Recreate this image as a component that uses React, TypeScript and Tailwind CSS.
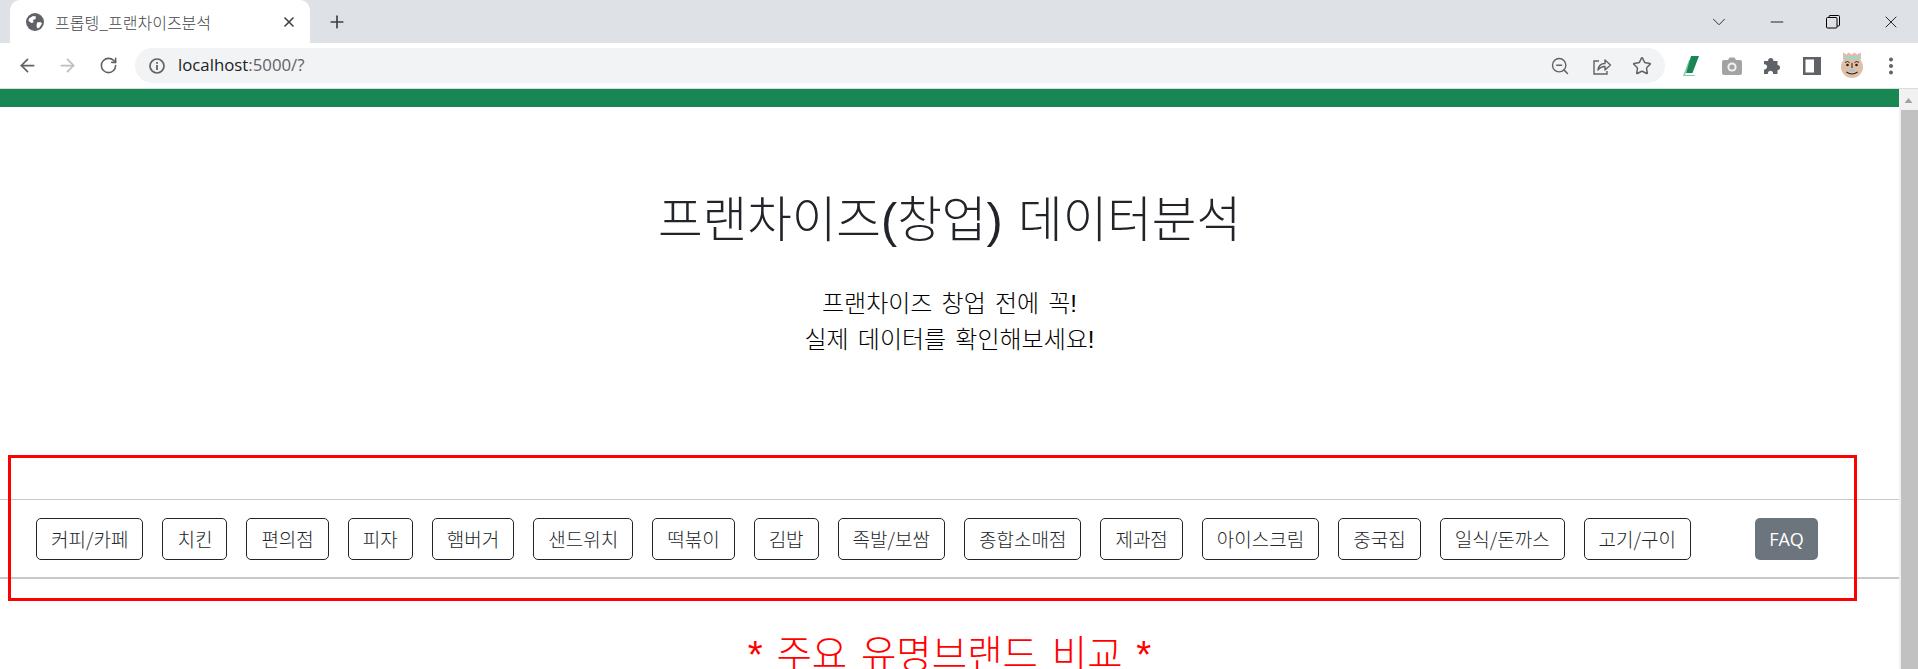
import { ArrowLeft, ArrowRight, RotateCw, Star, ZoomOut, Plus, X, ChevronDown, Minus } from 'lucide-react'

const categories = [
  '커피/카페', '치킨', '편의점', '피자', '햄버거', '샌드위치', '떡볶이', '김밥',
  '족발/보쌈', '종합소매점', '제과점', '아이스크림', '중국집', '일식/돈까스', '고기/구이',
]

function Globe() {
  return (
    <svg width="18" height="18" viewBox="0 0 18 18">
      <circle cx="9" cy="9" r="9" fill="#5f6368" />
      <path d="M3 5.5 7 3l3 .5-.5 2.5-2.5 1 .5 2.5-2 .5L2.5 8z" fill="#fff" />
      <path d="M11 9.5l3.5-.5 1.5 1.5-2.5 4-2 1-1-2.5z" fill="#fff" />
    </svg>
  )
}

function InfoIcon() {
  return (
    <svg width="18" height="18" viewBox="0 0 18 18" fill="none">
      <circle cx="9" cy="9" r="7" stroke="#5f6368" strokeWidth="1.7" />
      <rect x="8.1" y="8" width="1.8" height="5" fill="#5f6368" />
      <rect x="8.1" y="5" width="1.8" height="1.8" fill="#5f6368" />
    </svg>
  )
}

function ShareIcon() {
  return (
    <svg width="20" height="20" viewBox="0 0 20 20" fill="none" stroke="#5f6368" strokeWidth="1.4">
      <path d="M7 5H2v13h13v-3" />
      <path d="M6 14c.5-4 3-6.5 7-6.5V4l5.5 5-5.5 5v-3.5c-3 0-5 1-7 3.5z" strokeLinejoin="round" />
    </svg>
  )
}

function Restore() {
  return (
    <svg width="14" height="14" viewBox="0 0 14 14" fill="none" stroke="#000" strokeWidth="1">
      <rect x="0.5" y="2.5" width="10.5" height="10.5" rx="1" />
      <path d="M3 2.5V1.5a1 1 0 0 1 1-1h8.5a1 1 0 0 1 1 1V10a1 1 0 0 1-1 1H11" />
    </svg>
  )
}

function SlantMark() {
  return (
    <svg width="20" height="22" viewBox="0 0 20 22">
      <path d="M1 21 7 5h1.5L3 20h10l-.5 1z" fill="#7fcfa8" />
      <path d="M9 1h8l-6.5 17H4z" fill="#188754" />
    </svg>
  )
}

function Camera() {
  return (
    <svg width="20" height="18" viewBox="0 0 20 18">
      <path d="M6 3l1.5-2.5h5L14 3h4a2 2 0 0 1 2 2v11a2 2 0 0 1-2 2H2a2 2 0 0 1-2-2V5a2 2 0 0 1 2-2z" fill="#a3a3a3" />
      <circle cx="10" cy="10" r="4.6" fill="#fff" opacity="0.85" />
      <circle cx="10" cy="10" r="2.6" fill="#a3a3a3" />
    </svg>
  )
}

function Puzzle() {
  return (
    <svg width="19" height="19" viewBox="0 0 19 19">
      <path d="M1 6h4.2a2.6 2.6 0 1 1 5.1 0H14.5v4a2.6 2.6 0 1 1 0 5.2V19H10a2.6 2.6 0 1 0-5 0H1v-4.6a2.6 2.6 0 1 0 0-5.1z" fill="#5f6368" transform="translate(0 -1)" />
    </svg>
  )
}

function SidePanel() {
  return (
    <svg width="18" height="18" viewBox="0 0 18 18">
      <rect width="18" height="18" fill="#5f6368" />
      <rect x="2.5" y="2.5" width="8.5" height="13" fill="#fff" />
    </svg>
  )
}

function Avatar() {
  return (
    <svg width="24" height="27" viewBox="0 0 24 27">
      <circle cx="12" cy="15" r="11" fill="#dfbfa6" />
      <path d="M3 0.5l3.5 2 2-2 3 2 3-2 2.5 2 4-2v7H3z" fill="#e8b7b0" />
      <path d="M4 4h16v3H4z" fill="#9dd9c0" />
      <path d="M5 10.5q2.5-2 4.5 0M14.5 10.5q2.500-2 4.500 0" stroke="#333" strokeWidth="1" fill="none" />
      <circle cx="7.500" cy="13" r="1.300" fill="#222" />
      <circle cx="16.500" cy="13" r="1.300" fill="#222" />
      <rect x="11.300" y="11" width="1.400" height="5" fill="#5a4a42" />
      <path d="M9.500 17.500h5v2h-5z" fill="#8fc7e8" />
      <path d="M6.500 20q5.500 4 11 0" stroke="#222" strokeWidth="1.200" fill="none" />
    </svg>
  )
}

function Dots() {
  return (
    <svg width="6" height="18" viewBox="0 0 6 18" fill="#5f6368">
      <circle cx="3" cy="2.500" r="2" />
      <circle cx="3" cy="9" r="2" />
      <circle cx="3" cy="15.500" r="2" />
    </svg>
  )
}

function BrowserChrome() {
  return (
    <div className="font-['Noto_Sans','Noto_Sans_CJK_KR',sans-serif]">
      {/* 탭 영역 */}
      <div className="flex h-[43px] items-center bg-[#dee1e6]">
        <div className="relative ml-[10px] flex h-[43px] w-[300px] items-center self-end rounded-t-[10px] bg-white pl-4 pr-[13px]">
          <Globe />
          <span className="ml-[11px] flex-1 font-['Noto_Sans_CJK_KR',sans-serif] text-[16px] font-light leading-none text-[#45474a]">프롭텡_프랜차이즈분석</span>
          <X size={16} strokeWidth={2.4} color="#3c4043" />
        </div>
        <Plus size={20} strokeWidth={2} color="#3c4043" className="ml-[17px]" />
        <div className="ml-auto flex items-center">
          <ChevronDown size={22} strokeWidth={1} color="#222" className="mr-[37px]" />
          <Minus size={20} strokeWidth={1} color="#000" className="mr-[39px]" />
          <Restore />
          <X size={20} strokeWidth={1} color="#000" className="ml-[41px] mr-[17px]" />
        </div>
      </div>
      {/* 주소창 */}
      <div className="flex h-[46px] items-center border-b border-[#dadce0] bg-white">
        <ArrowLeft size={21} strokeWidth={2} color="#5f6368" className="ml-[17px]" />
        <ArrowRight size={21} strokeWidth={2} color="#bcbec1" className="ml-[19px]" />
        <RotateCw size={19} strokeWidth={2} color="#5f6368" className="ml-[21px]" />
        <div className="ml-[17px] flex h-[35px] w-[1530px] items-center rounded-full bg-[#f1f3f4] pl-[13px]">
          <InfoIcon />
          <span className="ml-[12px] font-['Open_Sans',sans-serif] text-[16.8px] leading-none text-[#202124]">
            localhost<span className="text-[#5f6368]">:5000/?</span>
          </span>
          <ZoomOut size={20} strokeWidth={1.700} color="#5f6368" className="ml-auto" />
          <span className="ml-[22px]"><ShareIcon /></span>
          <Star size={20} strokeWidth={1.800} color="#5f6368" className="ml-[20px] mr-[13px]" />
        </div>
        <span className="ml-[17px] flex"><SlantMark /></span>
        <span className="ml-[20px] flex"><Camera /></span>
        <span className="ml-[21px] flex"><Puzzle /></span>
        <span className="ml-[21px] flex"><SidePanel /></span>
        <span className="ml-[19px] flex"><Avatar /></span>
        <span className="ml-[24px] flex"><Dots /></span>
      </div>
    </div>
  )
}

function Scrollbar() {
  return (
    <div className="flex w-[19px] shrink-0 flex-col items-center bg-[#f1f1f1]">
      <svg width="19" height="21" viewBox="0 0 19 21" className="shrink-0">
        <path d="M5.500 14 9.500 9l4 5z" fill="#a3a3a3" />
      </svg>
      <div className="ml-[1px] w-[17px] flex-1 bg-[#c1c1c1]" />
    </div>
  )
}

export default function App() {
  return (
    <div className="relative flex h-[669px] w-full flex-col overflow-hidden bg-white">
      <BrowserChrome />
      <div className="flex min-h-0 flex-1">
        <main className="min-w-0 flex-1 font-['Liberation_Sans','Noto_Sans_CJK_KR',sans-serif] text-[#212529]">
          <div className="h-[18px] bg-[#198754]" />
          <section className="pt-[84px] text-center">
            <h1 className="text-[48.5px] font-light leading-[58px] [word-spacing:2px]">프랜차이즈(창업) 데이터분석</h1>
            <p className="mt-[37px] text-[24px] font-light leading-[36px] text-black [word-spacing:2.5px]">
              프랜차이즈 창업 전에 꼭!
              <br />
              실제 데이터를 확인해보세요!
            </p>
          </section>
          <nav className="mt-[141px] flex h-[80px] items-center gap-[19px] border-t border-b-2 border-[#c8c8c8] pl-[36px]">
            {categories.map(name => (
              <button key={name} className="h-[42px] rounded-[5px] border border-[#212529] px-[14px] font-['Noto_Sans_CJK_KR',sans-serif] text-[19px] font-light leading-none text-[#212529]">
                {name}
              </button>
            ))}
            <button className="ml-[45px] h-[42px] w-[63px] rounded-[5px] bg-[#6c757d] font-['Open_Sans',sans-serif] text-[18px] leading-none text-white">
              FAQ
            </button>
          </nav>
          <h2 className="mt-[53px] text-center text-[38.5px] font-light leading-[46px] text-[#ff0000] [word-spacing:3px]">* 주요 유명브랜드 비교 *</h2>
        </main>
        <Scrollbar />
      </div>
      {/* 스크린샷에 표시된 빨간 강조 박스 */}
      <div className="pointer-events-none absolute left-[8px] top-[455px] h-[146px] w-[1849px] border-[3px] border-[#ff0000]" />
    </div>
  )
}
